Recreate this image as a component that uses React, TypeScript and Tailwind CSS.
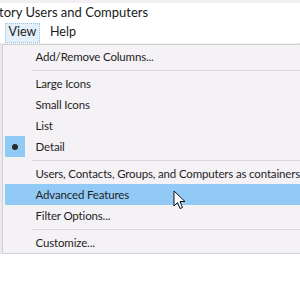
import React from 'react';

type Entry = { label?: string; sep?: boolean; checked?: boolean; active?: boolean };

const entries: Entry[] = [
  { label: 'Add/Remove Columns...' },
  { sep: true },
  { label: 'Large Icons' },
  { label: 'Small Icons' },
  { label: 'List' },
  { label: 'Detail', checked: true },
  { sep: true },
  { label: 'Users, Contacts, Groups, and Computers as containers' },
  { label: 'Advanced Features', active: true },
  { label: 'Filter Options...' },
  { sep: true },
  { label: 'Customize...' },
];

const Cursor = () => (
  <svg width="14" height="20" viewBox="0 0 14 20" className="absolute left-[173px] top-[190px]">
    <path d="M1 1 L1 16 L4.5 12.5 L7 18.5 L9.5 17.5 L7 11.5 L12 11.5 Z" fill="#fff" stroke="#111" strokeWidth="1" strokeLinejoin="round" />
  </svg>
);

const App: React.FC = () => {
  return (
    <div className="relative w-[300px] h-[300px] overflow-hidden bg-white font-['Lato',sans-serif] text-[11.5px] tracking-[-0.16px] text-[#1f1f1f]">
      <div className="h-[3px] bg-[#f4eff4]" />

      {/* Window title */}
      <div className="h-[19px] flex items-center -ml-[1px] text-[13px] tracking-normal text-[#1a1a1a] whitespace-nowrap">
        tory Users and Computers
      </div>

      {/* Menu bar */}
      <div className="h-[22px] flex items-center gap-[8px] pl-[5px] text-[12.5px] tracking-normal border-b border-dotted border-[#e4e4e4]">
        <div className="h-[20px] w-[35px] flex items-center justify-center bg-[#e3f0fa] border border-dotted border-[#9cc3e0] text-[#1a1a1a]">
          View
        </div>
        <div className="px-[2px] text-[#1a1a1a]">Help</div>
      </div>

      <div className="flex">
        {/* Content peeking out on the left */}
        <div className="w-[2px] h-[210px] bg-[#e9e9ee]" />

        {/* Drop-down menu */}
        <div className="flex-1 bg-[#f5f2f6] border-t border-l border-b border-[#cfcfd4] pt-[1px] pl-[2px]">
          {entries.map((e, i) =>
            e.sep ? (
              <div key={i} className="h-[6px] flex items-center pl-[27px]">
                <div className="h-px w-full bg-[#d9d7db]" />
              </div>
            ) : (
              <div
                key={i}
                className={`h-[21px] flex items-center whitespace-nowrap ${e.active ? 'bg-[#92caf6]' : ''}`}
              >
                <div className="w-[31px] h-full flex items-center">
                  {e.checked && (
                    <div className="w-[20px] h-[21px] bg-[#92caf6] flex items-center justify-center">
                      <div className="w-[6px] h-[6px] rounded-full bg-[#2a2a2a]" />
                    </div>
                  )}
                </div>
                <span>{e.label}</span>
              </div>
            )
          )}
        </div>
      </div>

      <Cursor />
    </div>
  );
};

export default App;
